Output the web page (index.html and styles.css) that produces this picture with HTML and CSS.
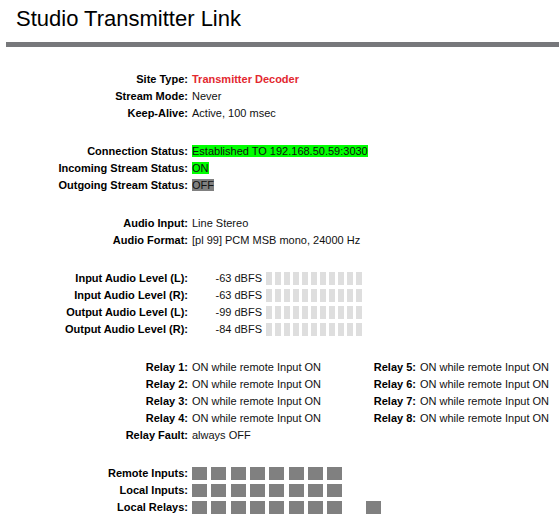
FILE: index.html
```html
<!DOCTYPE html>
<html lang="en">
<head>
    <meta charset="UTF-8">
    <meta name="viewport" content="width=device-width, initial-scale=1.0">
    <title>Studio Transmitter Link</title>
    <link rel="stylesheet" href="styles.css">
</head>
<body>

    <div class="header">
        <h1>Studio Transmitter Link</h1>
    </div>

    <div class="main">
        <div class="section">
            <div class="label">Site Type:</div><div class="value red">Transmitter Decoder</div>
            <div class="label">Stream Mode:</div><div class="value">Never</div>
            <div class="label">Keep-Alive:</div><div class="value">Active, 100 msec</div>
        </div>

        <div class="section">
            <div class="label">Connection Status:</div><div class="value"><span class="on">Established TO 192.168.50.59:3030</span></div>
            <div class="label">Incoming Stream Status:</div><div class="value"><span class="on">ON</span></div>
            <div class="label">Outgoing Stream Status:</div><div class="value"><span class="off">OFF</span></div>
        </div>

        <div class="section">
            <div class="label">Audio Input:</div><div class="value">Line Stereo</div>
            <div class="label">Audio Format:</div><div class="value">[pl 99] PCM MSB mono, 24000 Hz</div>
        </div>

        <div class="section levels">
            <div class="label">Input Audio Level (L):</div>
            <div class="db">-63 dBFS</div>
            <div class="meter"><i></i><i></i><i></i><i></i><i></i><i></i><i></i><i></i><i></i><i></i><i></i></div>

            <div class="label">Input Audio Level (R):</div>
            <div class="db">-63 dBFS</div>
            <div class="meter"><i></i><i></i><i></i><i></i><i></i><i></i><i></i><i></i><i></i><i></i><i></i></div>

            <div class="label">Output Audio Level (L):</div>
            <div class="db">-99 dBFS</div>
            <div class="meter"><i></i><i></i><i></i><i></i><i></i><i></i><i></i><i></i><i></i><i></i><i></i></div>

            <div class="label">Output Audio Level (R):</div>
            <div class="db">-84 dBFS</div>
            <div class="meter"><i></i><i></i><i></i><i></i><i></i><i></i><i></i><i></i><i></i><i></i><i></i></div>
        </div>

        <div class="section relays">
            <div class="label">Relay 1:</div><div class="value">ON while remote Input ON</div>
            <div class="label">Relay 5:</div><div class="value">ON while remote Input ON</div>
            <div class="label">Relay 2:</div><div class="value">ON while remote Input ON</div>
            <div class="label">Relay 6:</div><div class="value">ON while remote Input ON</div>
            <div class="label">Relay 3:</div><div class="value">ON while remote Input ON</div>
            <div class="label">Relay 7:</div><div class="value">ON while remote Input ON</div>
            <div class="label">Relay 4:</div><div class="value">ON while remote Input ON</div>
            <div class="label">Relay 8:</div><div class="value">ON while remote Input ON</div>
            <div class="label">Relay Fault:</div><div class="value">always OFF</div>
        </div>

        <div class="section">
            <div class="label">Remote Inputs:</div>
            <div class="lamps"><b></b><b></b><b></b><b></b><b></b><b></b><b></b><b></b></div>
            <div class="label">Local Inputs:</div>
            <div class="lamps"><b></b><b></b><b></b><b></b><b></b><b></b><b></b><b></b></div>
            <div class="label">Local Relays:</div>
            <div class="lamps"><b></b><b></b><b></b><b></b><b></b><b></b><b></b><b></b><b class="blank"></b><b></b></div>
        </div>
    </div>

</body>
</html>
```

FILE: styles.css
```css
body {
    font-family: "Liberation Sans", Arial, sans-serif;
    font-size: 11px;
    color: #111;
    margin: 0;
    padding: 0;
}
.header {
    margin-left: 6px;
    border-bottom: 5px solid #77787b;
}
h1 {
    font-size: 22px;
    font-weight: normal;
    line-height: 25px;
    color: #000;
    margin: 0;
    padding: 6px 0 11px 10px;
}
.main {
    padding-top: 24px;
}
.section {
    display: grid;
    grid-template-columns: 188px auto;
    column-gap: 4px;
    margin-bottom: 21px;
}
.section:last-child {
    margin-bottom: 0;
}
.label, .value, .db {
    line-height: 17px;
    white-space: nowrap;
}
.label {
    font-weight: bold;
    color: #000;
    text-align: right;
}
.red {
    color: #e3282f;
    font-weight: bold;
}
.on {
    background-color: #00ff00;
}
.off {
    background-color: #808080;
}
.levels {
    grid-template-columns: 188px 70px auto;
}
.db {
    text-align: right;
}
.meter, .lamps {
    display: flex;
    align-items: center;
    height: 17px;
}
.meter i {
    width: 6px;
    height: 13px;
    margin-right: 3px;
    background-color: #dedede;
}
.relays {
    grid-template-columns: 188px 174px 46px auto;
}
.lamps {
    gap: 4.33px;
}
.lamps b {
    width: 15px;
    height: 13px;
    background-color: #808080;
}
.lamps b.blank {
    background-color: transparent;
}
```
